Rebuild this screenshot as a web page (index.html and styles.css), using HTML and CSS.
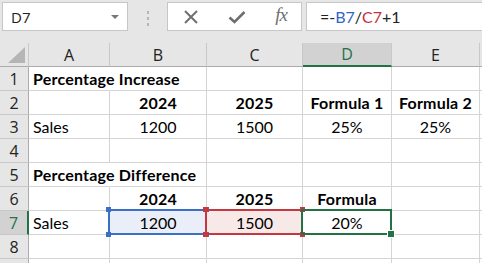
FILE: index.html
```html
<!DOCTYPE html>
<html lang="en">
<head>
    <meta charset="UTF-8">
    <title>Percentage Difference</title>
    <link rel="stylesheet" href="styles.css">
</head>
<body>
    <div class="toolbar">
        <div class="namebox">
            <span>D7</span>
            <svg class="arrow" width="8" height="4" viewBox="0 0 8 4"><path d="M0 0h8L4 4z" fill="#777"/></svg>
        </div>
        <div class="grip"><i></i><i></i><i></i></div>
        <div class="buttons">
            <svg width="16" height="16" viewBox="0 0 16 16"><path d="M2 2L14 14M14 2L2 14" stroke="#6f6f6f" stroke-width="2"/></svg>
            <svg width="18" height="16" viewBox="0 0 18 16"><path d="M1.5 8.5L6.5 13L16.5 3" stroke="#6f6f6f" stroke-width="2.6" fill="none"/></svg>
            <span class="fx">fx</span>
        </div>
        <div class="formula">=-<span class="ref-b">B7</span>/<span class="ref-c">C7</span>+1</div>
    </div>

    <div class="sheet">
        <!-- column headers -->
        <div class="hd corner"><svg width="17" height="16" viewBox="0 0 17 16"><path d="M17 0V16H0z" fill="#b5b5b5"/></svg></div>
        <div class="hd col">A</div>
        <div class="hd col">B</div>
        <div class="hd col">C</div>
        <div class="hd col active">D</div>
        <div class="hd col">E</div>
        <div class="hd col"></div>

        <!-- row 1 -->
        <div class="hd row">1</div>
        <div class="cell bold over">Percentage Increase</div>
        <div class="cell"></div><div class="cell"></div><div class="cell"></div><div class="cell"></div><div class="cell"></div>

        <!-- row 2 -->
        <div class="hd row">2</div>
        <div class="cell"></div>
        <div class="cell bold mid">2024</div>
        <div class="cell bold mid">2025</div>
        <div class="cell bold mid">Formula 1</div>
        <div class="cell bold mid">Formula 2</div>
        <div class="cell"></div>

        <!-- row 3 -->
        <div class="hd row">3</div>
        <div class="cell">Sales</div>
        <div class="cell mid">1200</div>
        <div class="cell mid">1500</div>
        <div class="cell mid">25%</div>
        <div class="cell mid">25%</div>
        <div class="cell"></div>

        <!-- row 4 -->
        <div class="hd row">4</div>
        <div class="cell"></div><div class="cell"></div><div class="cell"></div><div class="cell"></div><div class="cell"></div><div class="cell"></div>

        <!-- row 5 -->
        <div class="hd row">5</div>
        <div class="cell bold over">Percentage Difference</div>
        <div class="cell"></div><div class="cell"></div><div class="cell"></div><div class="cell"></div><div class="cell"></div>

        <!-- row 6 -->
        <div class="hd row">6</div>
        <div class="cell"></div>
        <div class="cell bold mid">2024</div>
        <div class="cell bold mid">2025</div>
        <div class="cell bold mid">Formula</div>
        <div class="cell"></div>
        <div class="cell"></div>

        <!-- row 7 -->
        <div class="hd row active">7</div>
        <div class="cell">Sales</div>
        <div class="cell mid fill-b">1200
            <span class="box box-b"><i class="h tl"></i><i class="h tr"></i><i class="h bl"></i><i class="h br"></i></span>
        </div>
        <div class="cell mid fill-c">1500
            <span class="box box-c"><i class="h tl"></i><i class="h tr"></i><i class="h bl"></i><i class="h br"></i></span>
        </div>
        <div class="cell mid">20%
            <span class="box box-d"><i class="h br"></i></span>
        </div>
        <div class="cell"></div>
        <div class="cell"></div>

        <!-- row 8 -->
        <div class="hd row">8</div>
        <div class="cell"></div><div class="cell"></div><div class="cell"></div><div class="cell"></div><div class="cell"></div><div class="cell"></div>

        <!-- row 9 -->
        <div class="hd row"></div>
        <div class="cell"></div><div class="cell"></div><div class="cell"></div><div class="cell"></div><div class="cell"></div><div class="cell"></div>
    </div>
</body>
</html>
```

FILE: styles.css
```css
/* General */
body {
    margin: 0;
    width: 482px;
    height: 263px;
    overflow: hidden;
    background: #fff;
    font-family: Lato, "Liberation Sans", sans-serif;
    color: #000;
}

/* Formula bar */
.toolbar {
    display: flex;
    align-items: flex-start;
    height: 43px;
    padding: 2px 0 0 2px;
    box-sizing: border-box;
    background: #e6e6e6;
}

.namebox,
.buttons,
.formula {
    height: 29px;
    box-sizing: border-box;
    background: #fff;
    border: 1px solid #c6c6c6;
    display: flex;
    align-items: center;
}

.namebox {
    width: 126px;
    padding: 0 8px 0 8px;
    justify-content: space-between;
    font-family: "Open Sans", "Noto Sans", sans-serif;
    font-size: 15px;
    color: #222;
}

.grip {
    width: 39px;
    display: flex;
    flex-direction: column;
    align-items: center;
    gap: 3px;
    padding-top: 9px;
}

.grip i {
    width: 2px;
    height: 3px;
    background: #b6b6b6;
}

.buttons {
    width: 135px;
    padding: 0 14px 0 15px;
    justify-content: space-between;
}

.fx {
    font-family: "Liberation Serif", serif;
    font-style: italic;
    font-size: 19px;
    color: #707070;
    letter-spacing: -1px;
    padding-bottom: 3px;
}

.formula {
    flex: 1;
    margin-left: 4px;
    border-right: none;
    padding-left: 13px;
    font-size: 16px;
    color: #222;
}

.ref-b {
    color: #2f66c8;
}

.ref-c {
    color: #c8303a;
}

/* Sheet grid */
.sheet {
    display: grid;
    grid-template-columns: 29px 81px 97px 96px 89px 88px 1fr;
    grid-auto-rows: 24px;
    height: 220px;
    overflow: hidden;
}

.hd {
    background: #e6e6e6;
    box-sizing: border-box;
    display: flex;
    align-items: center;
    justify-content: center;
    font-family: "Open Sans", "Noto Sans", sans-serif;
    font-size: 16px;
    color: #222;
}

.corner {
    justify-content: flex-end;
    align-items: flex-end;
    padding: 0 3px 3px 0;
    border-right: 1px solid #c8c8c8;
    border-bottom: 1px solid #ababab;
}

.col {
    border-right: 1px solid #c8c8c8;
    border-bottom: 1px solid #ababab;
}

.col.active {
    background: #d2d2d2;
    color: #217346;
    border-bottom: 2px solid #217346;
}

.row {
    border-right: 1px solid #ababab;
    border-bottom: 1px solid #c8c8c8;
}

.row.active {
    background: #d2d2d2;
    color: #217346;
    border-right: 2px solid #217346;
}

.cell {
    position: relative;
    box-sizing: border-box;
    border-right: 1px solid #d4d4d4;
    border-bottom: 1px solid #d4d4d4;
    display: flex;
    align-items: flex-end;
    padding: 0 0 2px 4px;
    font-size: 16px;
    white-space: nowrap;
}

.mid {
    justify-content: center;
    padding-left: 0;
}

.bold {
    font-weight: bold;
    letter-spacing: 0.2px;
}

.over {
    overflow: visible;
    z-index: 1;
    border-right-color: transparent;
}

.fill-b {
    background: #e9eef8;
}

.fill-c {
    background: #f8e9e9;
}

/* Reference and selection outlines */
.box {
    position: absolute;
    left: -2px;
    top: -2px;
    right: -1px;
    bottom: -1px;
    border: 2px solid;
    z-index: 2;
}

.box-b {
    color: #3a6fc6;
}

.box-c {
    color: #c6383f;
    z-index: 3;
}

.box-d {
    color: #217346;
    z-index: 4;
}

.h {
    position: absolute;
    width: 5px;
    height: 5px;
    background: currentColor;
}

.tl { left: -4px; top: -4px; }
.tr { right: -4px; top: -4px; }
.bl { left: -4px; bottom: -4px; }
.br { right: -4px; bottom: -4px; }

.box-d .br {
    width: 6px;
    height: 6px;
    border: 1px solid #fff;
    right: -5px;
    bottom: -5px;
}
```
